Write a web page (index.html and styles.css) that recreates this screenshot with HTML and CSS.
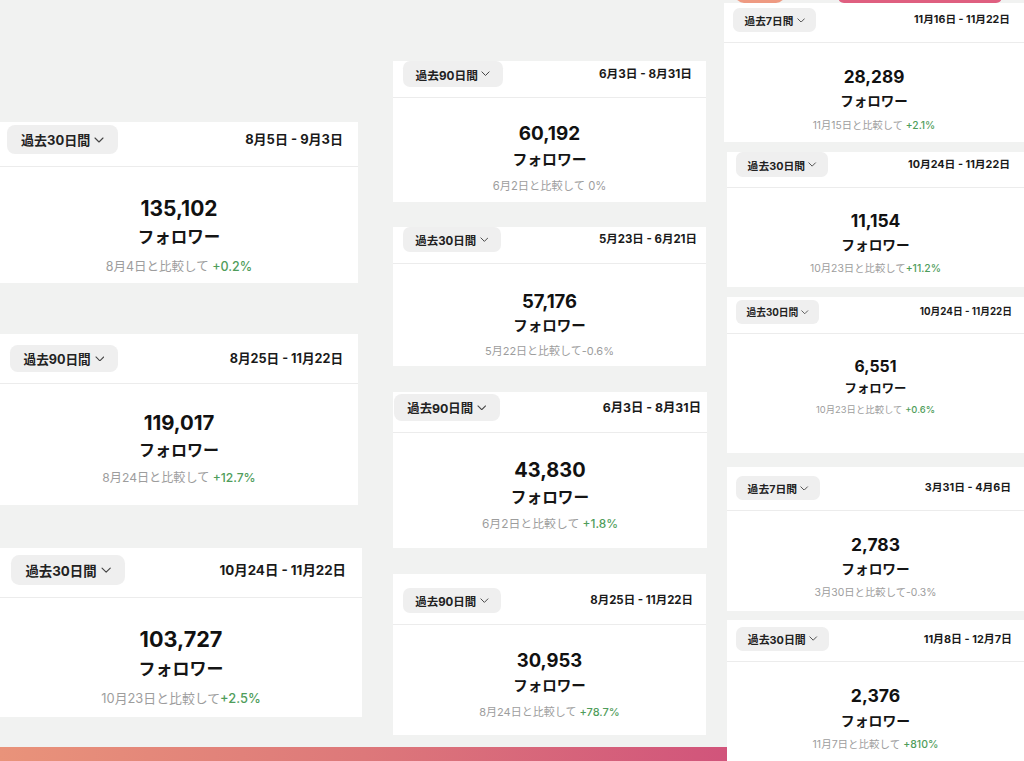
FILE: index.html
```html
<!DOCTYPE html>
<html lang="ja">
<head>
<meta charset="utf-8">
<title>フォロワー</title>
<link rel="stylesheet" href="styles.css">
</head>
<body>
<div class="canvas">
  <div class="grad"></div>

  <section class="card k1">
    <div class="head"><div class="pill">過去30日間<svg class="chev" viewBox="0 0 10 6"><polyline points="1,1 5,5 9,1"/></svg></div><div class="date">8月5日 - 9月3日</div></div>
    <div class="body"><div class="num">135,102</div><div class="lbl">フォロワー</div><div class="cmp">8月4日と比較して <span class="up">+0.2%</span></div></div>
  </section>

  <section class="card k2">
    <div class="head"><div class="pill">過去90日間<svg class="chev" viewBox="0 0 10 6"><polyline points="1,1 5,5 9,1"/></svg></div><div class="date">8月25日 - 11月22日</div></div>
    <div class="body"><div class="num">119,017</div><div class="lbl">フォロワー</div><div class="cmp">8月24日と比較して <span class="up">+12.7%</span></div></div>
  </section>

  <section class="card k3">
    <div class="head"><div class="pill">過去30日間<svg class="chev" viewBox="0 0 10 6"><polyline points="1,1 5,5 9,1"/></svg></div><div class="date">10月24日 - 11月22日</div></div>
    <div class="body"><div class="num">103,727</div><div class="lbl">フォロワー</div><div class="cmp">10月23日と比較して<span class="up">+2.5%</span></div></div>
  </section>

  <section class="card kA">
    <div class="head"><div class="pill">過去90日間<svg class="chev" viewBox="0 0 10 6"><polyline points="1,1 5,5 9,1"/></svg></div><div class="date">6月3日 - 8月31日</div></div>
    <div class="body"><div class="num">60,192</div><div class="lbl">フォロワー</div><div class="cmp">6月2日と比較して 0%</div></div>
  </section>

  <section class="card kB">
    <div class="head"><div class="pill">過去30日間<svg class="chev" viewBox="0 0 10 6"><polyline points="1,1 5,5 9,1"/></svg></div><div class="date">5月23日 - 6月21日</div></div>
    <div class="body"><div class="num">57,176</div><div class="lbl">フォロワー</div><div class="cmp">5月22日と比較して-0.6%</div></div>
  </section>

  <section class="card kC">
    <div class="head"><div class="pill">過去90日間<svg class="chev" viewBox="0 0 10 6"><polyline points="1,1 5,5 9,1"/></svg></div><div class="date">6月3日 - 8月31日</div></div>
    <div class="body"><div class="num">43,830</div><div class="lbl">フォロワー</div><div class="cmp">6月2日と比較して <span class="up">+1.8%</span></div></div>
  </section>

  <section class="card kD">
    <div class="head"><div class="pill">過去90日間<svg class="chev" viewBox="0 0 10 6"><polyline points="1,1 5,5 9,1"/></svg></div><div class="date">8月25日 - 11月22日</div></div>
    <div class="body"><div class="num">30,953</div><div class="lbl">フォロワー</div><div class="cmp">8月24日と比較して <span class="up">+78.7%</span></div></div>
  </section>

  <section class="card kI">
    <div class="head"><div class="pill">過去7日間<svg class="chev" viewBox="0 0 10 6"><polyline points="1,1 5,5 9,1"/></svg></div><div class="date">11月16日 - 11月22日</div></div>
    <div class="body"><div class="num">28,289</div><div class="lbl">フォロワー</div><div class="cmp">11月15日と比較して <span class="up">+2.1%</span></div></div>
  </section>

  <section class="card kII">
    <div class="head"><div class="pill">過去30日間<svg class="chev" viewBox="0 0 10 6"><polyline points="1,1 5,5 9,1"/></svg></div><div class="date">10月24日 - 11月22日</div></div>
    <div class="body"><div class="num">11,154</div><div class="lbl">フォロワー</div><div class="cmp">10月23日と比較して<span class="up">+11.2%</span></div></div>
  </section>

  <section class="card kIII">
    <div class="head"><div class="pill">過去30日間<svg class="chev" viewBox="0 0 10 6"><polyline points="1,1 5,5 9,1"/></svg></div><div class="date">10月24日 - 11月22日</div></div>
    <div class="body"><div class="num">6,551</div><div class="lbl">フォロワー</div><div class="cmp">10月23日と比較して <span class="up">+0.6%</span></div></div>
  </section>

  <section class="card kIV">
    <div class="head"><div class="pill">過去7日間<svg class="chev" viewBox="0 0 10 6"><polyline points="1,1 5,5 9,1"/></svg></div><div class="date">3月31日 - 4月6日</div></div>
    <div class="body"><div class="num">2,783</div><div class="lbl">フォロワー</div><div class="cmp">3月30日と比較して-0.3%</div></div>
  </section>

  <section class="card kV">
    <div class="head"><div class="pill">過去30日間<svg class="chev" viewBox="0 0 10 6"><polyline points="1,1 5,5 9,1"/></svg></div><div class="date">11月8日 - 12月7日</div></div>
    <div class="body"><div class="num">2,376</div><div class="lbl">フォロワー</div><div class="cmp">11月7日と比較して <span class="up">+810%</span></div></div>
  </section>

  <div class="deco deco-a"></div>
  <div class="deco deco-b"></div>
</div>
</body>
</html>
```
FILE: styles.css
```css
html, body {
  margin: 0;
  padding: 0;
  background: #f1f2f1;
}

.canvas {
  position: relative;
  width: 1024px;
  height: 761px;
  overflow: hidden;
  background: #f1f2f1;
  font-family: "Inter", "Noto Sans CJK JP", sans-serif;
  color: #151515;
}

.grad {
  position: absolute;
  left: 0;
  top: 747px;
  width: 727px;
  height: 14px;
  background: linear-gradient(90deg, #e9937a 0%, #dd787a 50%, #d1547b 100%);
}

.deco {
  position: absolute;
  top: -6px;
  height: 9px;
  border-radius: 0 0 6px 6px;
  z-index: 2;
}
.deco-a {
  left: 735px;
  width: 50px;
  background: #ee9a82;
  border-radius: 0 0 12px 12px;
}
.deco-b {
  left: 838px;
  width: 164px;
  background: #df5f80;
}

.card {
  --k: 1;
  position: absolute;
  top: var(--y);
  left: var(--x);
  width: var(--w);
  height: var(--h);
  background: #ffffff;
  display: flex;
  flex-direction: column;
  overflow: hidden;
}

.head {
  flex: none;
  box-sizing: border-box;
  height: var(--hh);
  padding: var(--pt) var(--pr) 0 var(--pl);
  display: flex;
  justify-content: space-between;
  align-items: flex-start;
  border-bottom: 1px solid #ececec;
}

.pill {
  box-sizing: border-box;
  height: var(--ph);
  display: flex;
  align-items: center;
  gap: calc(4px * var(--k));
  padding: 0 calc(14px * var(--k));
  background: #efefef;
  border-radius: calc(8px * var(--k));
  font-size: calc(13px * var(--k));
  font-weight: 700;
  color: #222;
  white-space: nowrap;
}

.chev {
  width: calc(10px * var(--k));
  height: calc(6px * var(--k));
  fill: none;
  stroke: #444;
  stroke-width: 1.1;
  stroke-linecap: round;
  stroke-linejoin: round;
}

.date {
  line-height: var(--ph);
  font-size: calc(13px * var(--k));
  font-weight: 700;
  color: #1a1a1a;
  white-space: nowrap;
}

.body {
  padding-top: var(--bp);
  display: flex;
  flex-direction: column;
  align-items: center;
  line-height: var(--lh);
  white-space: nowrap;
}

.num {
  font-size: calc(21px * var(--k));
  font-weight: 700;
  color: #111;
}

.lbl {
  font-size: calc(16.5px * var(--k));
  font-weight: 700;
  color: #151515;
}

.cmp {
  font-size: calc(12.5px * var(--k));
  color: #9d9d9d;
}

.up {
  color: #4f9d5b;
  font-weight: 500;
}

/* column 1 */
.k1 { --x: 0px; --y: 122px; --w: 358px; --h: 161px; --hh: 45px; --pt: 3px; --ph: 29px; --pl: 7px; --pr: 15px; --k: 1; --lh: 29px; --bp: 27px; }
.k2 { --x: 0px; --y: 334px; --w: 358px; --h: 171px; --hh: 50px; --pt: 11px; --ph: 27px; --pl: 10px; --pr: 15px; --k: 0.97; --lh: 27.5px; --bp: 25px; }
.k3 { --x: 0px; --y: 548px; --w: 362px; --h: 169px; --hh: 50px; --pt: 7px; --ph: 30px; --pl: 11px; --pr: 16px; --k: 1.03; --lh: 30px; --bp: 26px; }

/* column 2 */
.kA { --x: 393px; --y: 61px; --w: 313px; --h: 141px; --hh: 37px; --pt: 0px; --ph: 26px; --pl: 10px; --pr: 14px; --k: 0.9; --lh: 26px; --bp: 23px; }
.kB { --x: 393px; --y: 227px; --w: 313px; --h: 139px; --hh: 37px; --pt: 0px; --ph: 25px; --pl: 10px; --pr: 9px; --k: 0.88; --lh: 25px; --bp: 24.5px; }
.kC { --x: 393px; --y: 392px; --w: 314px; --h: 156px; --hh: 41px; --pt: 2px; --ph: 27px; --pl: 1px; --pr: 6px; --k: 0.95; --lh: 27px; --bp: 23.5px; }
.kD { --x: 393px; --y: 574px; --w: 313px; --h: 161px; --hh: 51px; --pt: 14px; --ph: 25px; --pl: 10px; --pr: 13px; --k: 0.88; --lh: 26px; --bp: 22px; }

/* column 3 */
.kI   { --x: 724px; --y: 3px;   --w: 300px; --h: 139px; --hh: 40px; --pt: 5px; --ph: 24px; --pl: 9px; --pr: 14px; --k: 0.82; --lh: 24px; --bp: 22px; }
.kII  { --x: 727px; --y: 152px; --w: 297px; --h: 135px; --hh: 36px; --pt: 0px; --ph: 25px; --pl: 9px; --pr: 14px; --k: 0.83; --lh: 24px; --bp: 21px; }
.kIII { --x: 727px; --y: 297px; --w: 297px; --h: 156px; --hh: 37px; --pt: 3px; --ph: 24px; --pl: 9px; --pr: 12px; --k: 0.75; --lh: 21.5px; --bp: 22px; }
.kIV  { --x: 727px; --y: 467px; --w: 297px; --h: 144px; --hh: 44px; --pt: 9px; --ph: 24px; --pl: 9px; --pr: 13px; --k: 0.83; --lh: 24px; --bp: 22px; }
.kV   { --x: 727px; --y: 620px; --w: 297px; --h: 141px; --hh: 42px; --pt: 7px; --ph: 24px; --pl: 9px; --pr: 12px; --k: 0.84; --lh: 24.5px; --bp: 22px; }
```
